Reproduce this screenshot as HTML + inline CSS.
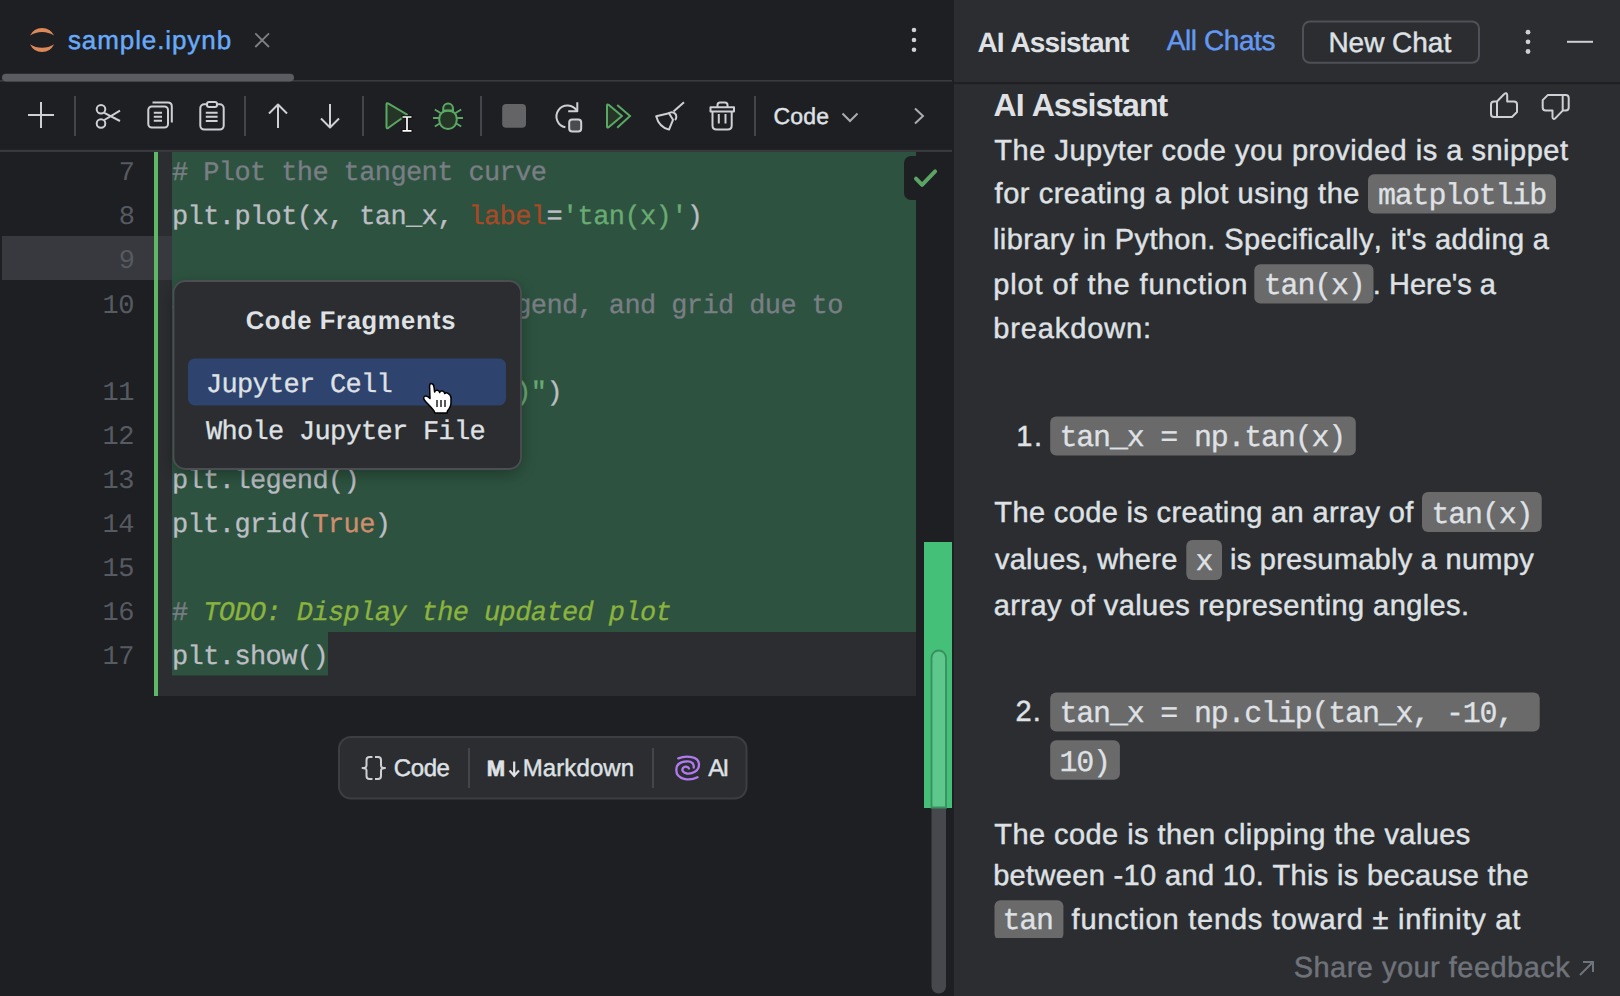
<!DOCTYPE html>
<html><head><meta charset="utf-8"><title>sample.ipynb - AI Assistant</title>
<style>
html,body{margin:0;padding:0;background:#1e1f22;width:1620px;height:996px;overflow:hidden}
svg{display:block;font-kerning:none;text-rendering:geometricPrecision}
text{font-kerning:none}
</style></head><body>
<svg width="1620" height="996" viewBox="0 0 1620 996">
<rect x="0.00" y="0.00" width="954.00" height="996.00" rx="0" fill="#1e1f22" />
<path d="M30,35.6 A13.3,13.3 0 0 1 54.1,35.6 A22.5,22.5 0 0 0 30,35.6 Z" fill="#dc8859"/>
<path d="M30,44.3 A13.3,13.3 0 0 0 54.1,44.3 A22.5,22.5 0 0 1 30,44.3 Z" fill="#dc8859"/>
<text x="67.98" y="49.40" fill="#68aafb" style="font-family:'Liberation Sans', sans-serif;font-size:26px;letter-spacing:0.902px;stroke:#68aafb;stroke-width:0.45px;" >sample.ipynb</text>
<path d="M255.3,33.3 L269,47 M269,33.3 L255.3,47" stroke="#7d8086" stroke-width="1.8" fill="none"/>
<circle cx="914" cy="30" r="2.3" fill="#ced0d6"/>
<circle cx="914" cy="40" r="2.3" fill="#ced0d6"/>
<circle cx="914" cy="49.8" r="2.3" fill="#ced0d6"/>
<rect x="0.00" y="80.00" width="952.00" height="1.60" rx="0" fill="#393b40" />
<rect x="2.00" y="73.80" width="292.00" height="7.60" rx="3.8" fill="#5a5c61" />
<rect x="0.00" y="149.90" width="952.00" height="2.00" rx="0" fill="#393b40" />
<path d="M28,115 H54 M41,102 V128" stroke="#ced0d6" stroke-width="2" fill="none" stroke-linecap="butt" stroke-linejoin="round"/>
<rect x="74.00" y="96.00" width="2.00" height="40.00" rx="0" fill="#43454a" />
<rect x="244.00" y="96.00" width="2.00" height="40.00" rx="0" fill="#43454a" />
<rect x="362.00" y="96.00" width="2.00" height="40.00" rx="0" fill="#43454a" />
<rect x="480.00" y="96.00" width="2.00" height="40.00" rx="0" fill="#43454a" />
<rect x="754.00" y="96.00" width="2.00" height="40.00" rx="0" fill="#43454a" />
<circle cx="101" cy="109.3" r="4.3" stroke="#ced0d6" stroke-width="2" fill="none" stroke-linecap="butt" stroke-linejoin="round"/><circle cx="101" cy="123.5" r="4.3" stroke="#ced0d6" stroke-width="2" fill="none" stroke-linecap="butt" stroke-linejoin="round"/>
<path d="M104.3,112.8 L120,121 M104.3,120 L120,110.6" stroke="#ced0d6" stroke-width="2" fill="none" stroke-linecap="butt" stroke-linejoin="round"/>
<rect x="148.3" y="106.5" width="19.7" height="21.1" rx="3.5" stroke="#ced0d6" stroke-width="2" fill="none" stroke-linecap="butt" stroke-linejoin="round"/>
<path d="M152.5,102.5 H167.8 Q171.8,102.5 171.8,106.5 V122.5" stroke="#ced0d6" stroke-width="2" fill="none" stroke-linecap="butt" stroke-linejoin="round"/>
<path d="M153.8,112.7 H162 M153.8,116.7 H162 M153.8,120.8 H162" stroke="#ced0d6" stroke-width="2" fill="none" stroke-linecap="butt" stroke-linejoin="round"/>
<rect x="200.3" y="104.2" width="23.4" height="25.4" rx="4" stroke="#ced0d6" stroke-width="2" fill="none" stroke-linecap="butt" stroke-linejoin="round"/>
<rect x="207" y="102" width="10" height="5" rx="2" fill="#1e1f22" stroke="#ced0d6" stroke-width="2" fill="none" stroke-linecap="butt" stroke-linejoin="round"/>
<path d="M205.8,112.7 H217.6 M205.8,116.7 H217.6 M205.8,121 H217.6" stroke="#ced0d6" stroke-width="2" fill="none" stroke-linecap="butt" stroke-linejoin="round"/>
<path d="M278,104.5 V128 M269,113.5 L278,104.5 L287,113.5" stroke="#ced0d6" stroke-width="2" fill="none" stroke-linecap="butt" stroke-linejoin="round"/>
<path d="M330,104 V127.5 M321,118.5 L330,127.5 L339,118.5" stroke="#ced0d6" stroke-width="2" fill="none" stroke-linecap="butt" stroke-linejoin="round"/>
<path d="M386.5,104.5 Q386.5,102.5 388.5,103.6 L407,114.5 L388.5,127.8 Q386.5,129 386.5,127 Z" stroke="#5aa864" stroke-width="2" fill="#253627" stroke-linejoin="round"/>
<path d="M401.5,117 H412.5 M407,117 V130.8 M401.5,130.8 H412.5" stroke="#111" stroke-width="3.6"/>
<path d="M402.5,117 H411.5 M407,117 V130.8 M402.5,130.8 H411.5" stroke="#fff" stroke-width="1.7"/>
<path d="M443.2,110.5 V108.5 A4.9,5 0 0 1 453,108.5 V110.5 Z" stroke="#5aa864" stroke-width="2" fill="#253627" stroke-linejoin="round"/>
<path d="M448,110.8 C453.5,110.8 456.8,114 456.8,119.5 C456.8,125 453,129 448,129 C443,129 439.2,125 439.2,119.5 C439.2,114 442.5,110.8 448,110.8 Z" stroke="#5aa864" stroke-width="2" fill="#253627" stroke-linejoin="round"/>
<path d="M433,118 H439.5 M456.5,118 H463 M434.8,109.5 L440.5,113 M461.2,109.5 L455.5,113 M434.8,126.5 L440.5,123 M461.2,126.5 L455.5,123" stroke="#5aa864" stroke-width="2"/>
<rect x="502.20" y="104.10" width="23.80" height="23.70" rx="4" fill="#646466" />
<path d="M577,111 A11,11 0 1 0 565.4,127.3" stroke="#ced0d6" stroke-width="2" fill="none" stroke-linecap="butt" stroke-linejoin="round"/>
<path d="M577.3,102.2 V111.3 H568.2" stroke="#ced0d6" stroke-width="2" fill="none" stroke-linecap="butt" stroke-linejoin="round"/>
<rect x="569.2" y="119.5" width="12" height="12" rx="3" fill="#4a4b4f" stroke="#ced0d6" stroke-width="2" fill="none" stroke-linecap="butt" stroke-linejoin="round"/>
<path d="M607,105.5 Q607,103.8 608.6,104.8 L622,116 L608.6,127.2 Q607,128.2 607,126.5 Z" stroke="#5aa864" stroke-width="2" fill="#253627" stroke-linejoin="round"/>
<path d="M617.2,104.9 L630,116 L617.2,127.7" stroke="#5aa864" stroke-width="2" fill="none"/>
<path d="M684,102.2 L673.5,111.5" stroke="#ced0d6" stroke-width="2" fill="none" stroke-linecap="butt" stroke-linejoin="round"/>
<path d="M668.5,113.5 A4,4 0 0 1 675,120" stroke="#ced0d6" stroke-width="2" fill="none" stroke-linecap="butt" stroke-linejoin="round"/>
<path d="M656.2,116.2 L669,113.3 L673,119.8 L669,129.6 Q659,127 656.2,116.2 Z" stroke="#ced0d6" stroke-width="2" fill="none" stroke-linecap="butt" stroke-linejoin="round"/>
<path d="M710.5,107.2 H734 V111.5 H710.5 Z" stroke="#ced0d6" stroke-width="2" fill="none" stroke-linecap="butt" stroke-linejoin="round"/>
<path d="M717.5,107 V105 Q717.5,102.5 720,102.5 H725 Q727.5,102.5 727.5,105 V107" stroke="#ced0d6" stroke-width="2" fill="none" stroke-linecap="butt" stroke-linejoin="round"/>
<path d="M712.5,111.5 V125.5 Q712.5,129.5 716.5,129.5 H727.7 Q731.7,129.5 731.7,125.5 V111.5" stroke="#ced0d6" stroke-width="2" fill="none" stroke-linecap="butt" stroke-linejoin="round"/>
<path d="M718.8,114 V123.5 M725.5,114 V123.5" stroke="#ced0d6" stroke-width="2" fill="none" stroke-linecap="butt" stroke-linejoin="round"/>
<text x="773.43" y="124.00" fill="#dfe1e5" style="font-family:'Liberation Sans', sans-serif;font-size:23px;letter-spacing:0.202px;stroke:#dfe1e5;stroke-width:0.45px;" >Code</text>
<path d="M842.5,113.5 L850,121 L857.5,113.5" stroke="#a9acb1" stroke-width="2" fill="none"/>
<path d="M915,108.5 L923,116 L915,123.5" stroke="#a9acb1" stroke-width="2" fill="none"/>
<rect x="158.00" y="152.00" width="758.00" height="544.00" rx="0" fill="#2b2d30" />
<rect x="2.00" y="236.00" width="170.00" height="44.00" rx="0" fill="#38393e" />
<rect x="154.00" y="152.00" width="4.00" height="544.00" rx="0" fill="#5fb865" />
<rect x="172.00" y="152.00" width="744.00" height="480.00" rx="0" fill="#2d5340" />
<rect x="172.00" y="632.00" width="156.00" height="43.50" rx="0" fill="#2d5340" />
<text x="118.80" y="180" fill="#565a61" style="font-family:'Liberation Mono', monospace;font-size:27px;letter-spacing:-0.6px">7</text>
<text x="118.80" y="224" fill="#565a61" style="font-family:'Liberation Mono', monospace;font-size:27px;letter-spacing:-0.6px">8</text>
<text x="118.80" y="268" fill="#565a61" style="font-family:'Liberation Mono', monospace;font-size:27px;letter-spacing:-0.6px">9</text>
<text x="102.59" y="312.5" fill="#565a61" style="font-family:'Liberation Mono', monospace;font-size:27px;letter-spacing:-0.6px">10</text>
<text x="102.59" y="400" fill="#565a61" style="font-family:'Liberation Mono', monospace;font-size:27px;letter-spacing:-0.6px">11</text>
<text x="102.59" y="444" fill="#565a61" style="font-family:'Liberation Mono', monospace;font-size:27px;letter-spacing:-0.6px">12</text>
<text x="102.59" y="488" fill="#565a61" style="font-family:'Liberation Mono', monospace;font-size:27px;letter-spacing:-0.6px">13</text>
<text x="102.59" y="532" fill="#565a61" style="font-family:'Liberation Mono', monospace;font-size:27px;letter-spacing:-0.6px">14</text>
<text x="102.59" y="576" fill="#565a61" style="font-family:'Liberation Mono', monospace;font-size:27px;letter-spacing:-0.6px">15</text>
<text x="102.59" y="620" fill="#565a61" style="font-family:'Liberation Mono', monospace;font-size:27px;letter-spacing:-0.6px">16</text>
<text x="102.59" y="664" fill="#565a61" style="font-family:'Liberation Mono', monospace;font-size:27px;letter-spacing:-0.6px">17</text>
<text x="172.00" y="180.00" fill="#7a7e85" style="font-family:'Liberation Mono', monospace;font-size:27px;letter-spacing:-0.603px;stroke:#7a7e85;stroke-width:0.3px;"># Plot the tangent curve</text>
<text x="172.00" y="224.00" fill="#bcbec4" style="font-family:'Liberation Mono', monospace;font-size:27px;letter-spacing:-0.603px;stroke:#bcbec4;stroke-width:0.3px;">plt.plot(x, tan_x, </text>
<text x="468.40" y="224.00" fill="#aa4926" style="font-family:'Liberation Mono', monospace;font-size:27px;letter-spacing:-0.603px;stroke:#aa4926;stroke-width:0.3px;">label</text>
<text x="546.40" y="224.00" fill="#bcbec4" style="font-family:'Liberation Mono', monospace;font-size:27px;letter-spacing:-0.603px;stroke:#bcbec4;stroke-width:0.3px;">=</text>
<text x="562.00" y="224.00" fill="#6aab73" style="font-family:'Liberation Mono', monospace;font-size:27px;letter-spacing:-0.603px;stroke:#6aab73;stroke-width:0.3px;">&#x27;tan(x)&#x27;</text>
<text x="686.80" y="224.00" fill="#bcbec4" style="font-family:'Liberation Mono', monospace;font-size:27px;letter-spacing:-0.603px;stroke:#bcbec4;stroke-width:0.3px;">)</text>
<text x="172.00" y="312.50" fill="#7a7e85" style="font-family:'Liberation Mono', monospace;font-size:27px;letter-spacing:-0.603px;stroke:#7a7e85;stroke-width:0.3px;"># Add title, label, legend, and grid due to</text>
<text x="172.00" y="356.00" fill="#7a7e85" style="font-family:'Liberation Mono', monospace;font-size:27px;letter-spacing:-0.603px;stroke:#7a7e85;stroke-width:0.3px;">   the clipping</text>
<text x="172.00" y="400.00" fill="#bcbec4" style="font-family:'Liberation Mono', monospace;font-size:27px;letter-spacing:-0.603px;stroke:#bcbec4;stroke-width:0.3px;">plt.title(</text>
<text x="328.00" y="400.00" fill="#6aab73" style="font-family:'Liberation Mono', monospace;font-size:27px;letter-spacing:-0.603px;stroke:#6aab73;stroke-width:0.3px;">&quot;Plot: tan(x)&quot;</text>
<text x="546.40" y="400.00" fill="#bcbec4" style="font-family:'Liberation Mono', monospace;font-size:27px;letter-spacing:-0.603px;stroke:#bcbec4;stroke-width:0.3px;">)</text>
<text x="172.00" y="444.00" fill="#bcbec4" style="font-family:'Liberation Mono', monospace;font-size:27px;letter-spacing:-0.603px;stroke:#bcbec4;stroke-width:0.3px;">plt.ylabel(</text>
<text x="343.60" y="444.00" fill="#6aab73" style="font-family:'Liberation Mono', monospace;font-size:27px;letter-spacing:-0.603px;stroke:#6aab73;stroke-width:0.3px;">&quot;y&quot;</text>
<text x="390.40" y="444.00" fill="#bcbec4" style="font-family:'Liberation Mono', monospace;font-size:27px;letter-spacing:-0.603px;stroke:#bcbec4;stroke-width:0.3px;">)</text>
<text x="172.00" y="488.00" fill="#bcbec4" style="font-family:'Liberation Mono', monospace;font-size:27px;letter-spacing:-0.603px;stroke:#bcbec4;stroke-width:0.3px;">plt.legend()</text>
<text x="172.00" y="532.00" fill="#bcbec4" style="font-family:'Liberation Mono', monospace;font-size:27px;letter-spacing:-0.603px;stroke:#bcbec4;stroke-width:0.3px;">plt.grid(</text>
<text x="312.40" y="532.00" fill="#cf8e6d" style="font-family:'Liberation Mono', monospace;font-size:27px;letter-spacing:-0.603px;stroke:#cf8e6d;stroke-width:0.3px;">True</text>
<text x="374.80" y="532.00" fill="#bcbec4" style="font-family:'Liberation Mono', monospace;font-size:27px;letter-spacing:-0.603px;stroke:#bcbec4;stroke-width:0.3px;">)</text>
<text x="172.00" y="620.00" fill="#7a7e85" style="font-family:'Liberation Mono', monospace;font-size:27px;letter-spacing:-0.603px;stroke:#7a7e85;stroke-width:0.3px;"># </text>
<text x="203.20" y="620.00" fill="#8bb33d" style="font-family:'Liberation Mono', monospace;font-size:27px;letter-spacing:-0.603px;font-style:italic;stroke:#8bb33d;stroke-width:0.3px;">TODO: Display the updated plot</text>
<text x="172.00" y="664.00" fill="#bcbec4" style="font-family:'Liberation Mono', monospace;font-size:27px;letter-spacing:-0.603px;stroke:#bcbec4;stroke-width:0.3px;">plt.show()</text>
<rect x="904.00" y="156.00" width="60.00" height="44.00" rx="7" fill="#1e1f22" />
<path d="M916,178.6 L922.1,184.8 L935.1,171.4" stroke="#5aa564" stroke-width="4" stroke-linecap="round" stroke-linejoin="round" fill="none"/>
<rect x="916.00" y="200.00" width="36.00" height="796.00" rx="0" fill="#1e1f22" />
<rect x="924.00" y="542.00" width="28.00" height="266.00" rx="0" fill="#45c078" />
<rect x="931.50" y="650.50" width="14.50" height="343.00" rx="7.25" fill="#46484d" />
<path d="M931.5,807.5 V657.75 A7.25,7.25 0 0 1 946,657.75 V807.5 Z" fill="#5ec78b" stroke="#38905c" stroke-width="1.8"/>
<filter id="sh" x="-20%" y="-20%" width="140%" height="150%"><feDropShadow dx="0" dy="5" stdDeviation="9" flood-color="#000" flood-opacity="0.35"/></filter>
<rect x="173.5" y="281" width="347.5" height="188" rx="12" fill="#2b2d30" filter="url(#sh)"/>
<rect x="173.5" y="281" width="347.5" height="188" rx="12" fill="#2b2d30" stroke="#4c4e53" stroke-width="1.8"/>
<text x="245.75" y="328.60" fill="#dfe1e5" style="font-family:'Liberation Sans', sans-serif;font-size:25.5px;font-weight:bold;letter-spacing:0.653px;" >Code Fragments</text>
<rect x="188.00" y="358.40" width="318.00" height="47.20" rx="7" fill="#2e436e" />
<text x="206.00" y="392.00" fill="#dfe1e5" style="font-family:'Liberation Mono', monospace;font-size:27px;letter-spacing:-0.703px;stroke:#dfe1e5;stroke-width:0.3px;">Jupyter Cell</text>
<text x="206.00" y="439.40" fill="#dfe1e5" style="font-family:'Liberation Mono', monospace;font-size:27px;letter-spacing:-0.703px;stroke:#dfe1e5;stroke-width:0.3px;">Whole Jupyter File</text>
<path d="M431,383.5 C432.8,383.5 433.8,385 434,387 L434.6,392 C435,390.5 436,390 437.5,390.2 C439,390.5 439.5,391.5 439.7,392.5 C440,391 441.5,390.8 442.5,391 C444,391.3 444.5,392.5 444.7,393.5 C445.5,392.5 447,392.7 448,393.3 C450,394.3 451,396 451,398 L451,403 C451,406 449,409 447.5,411 L447,413 L435,413 L434,411 C432,408 429,405 426,402 C423.5,399.5 423,397.5 424.5,396.5 C426,395.5 428,396.5 430,398.5 L429.6,387 C429.5,385 430,383.5 431,383.5 Z" fill="#fff" stroke="#000" stroke-width="1.5" stroke-linejoin="round"/>
<path d="M437,400 V407 M441,400 V407 M445,400 V407" stroke="#000" stroke-width="1.3"/>
<rect x="339" y="737" width="407.5" height="61.5" rx="12" fill="#2b2d30" stroke="#3c3e43" stroke-width="2"/>
<path d="M372.5,757 H369.5 Q366.5,757 366.5,760 V765.5 Q366.5,768 362.5,768 Q366.5,768 366.5,770.5 V776 Q366.5,779 369.5,779 H372.5" stroke="#ced0d6" stroke-width="2" fill="none" stroke-linecap="butt" stroke-linejoin="round"/>
<path d="M375,757 H378 Q381,757 381,760 V765.5 Q381,768 385,768 Q381,768 381,770.5 V776 Q381,779 378,779 H375" stroke="#ced0d6" stroke-width="2" fill="none" stroke-linecap="butt" stroke-linejoin="round"/>
<text x="393.78" y="776.10" fill="#dfe1e5" style="font-family:'Liberation Sans', sans-serif;font-size:24px;letter-spacing:-0.397px;stroke:#dfe1e5;stroke-width:0.45px;" >Code</text>
<rect x="468.00" y="748.00" width="2.00" height="40.00" rx="0" fill="#43454a" />
<text x="486.83" y="776.10" fill="#dfe1e5" style="font-family:'Liberation Sans', sans-serif;font-size:22px;font-weight:bold;" stroke="#dfe1e5" stroke-width="0.7">M</text>
<path d="M514.2,761.5 V775.5 M509.5,770.5 L514.2,775.8 L519,770.5" stroke="#dfe1e5" stroke-width="2.2" fill="none"/>
<text x="522.63" y="776.10" fill="#dfe1e5" style="font-family:'Liberation Sans', sans-serif;font-size:24px;letter-spacing:0.117px;stroke:#dfe1e5;stroke-width:0.45px;" >Markdown</text>
<rect x="652.00" y="748.00" width="2.00" height="40.00" rx="0" fill="#43454a" />
<path d="M678.3,758.3 C686,755.5 699,756 699,764.5 C699,771.5 692,774 687,773.5 C683,773 681.5,770 683,768 C684.5,766 688,766.5 689,768.5" stroke="#b27af0" stroke-width="2.3" fill="none" stroke-linecap="round"/>
<path d="M697.5,777.3 C690,781 676.3,780 676.3,770 C676.3,763 682.5,761.3 687.5,761.3 C692,761.3 694.2,764 693.7,767.5" stroke="#b27af0" stroke-width="2.3" fill="none" stroke-linecap="round"/>
<text x="708.15" y="775.90" fill="#dfe1e5" style="font-family:'Liberation Sans', sans-serif;font-size:24px;letter-spacing:-1.614px;stroke:#dfe1e5;stroke-width:0.45px;" >AI</text>
<rect x="954.00" y="0.00" width="666.00" height="996.00" rx="0" fill="#2b2d30" />
<rect x="954.00" y="82.20" width="666.00" height="2.00" rx="0" fill="#1e1f22" />
<text x="977.50" y="52.20" fill="#dfe1e5" style="font-family:'Liberation Sans', sans-serif;font-size:28px;font-weight:bold;letter-spacing:-0.916px;" >AI Assistant</text>
<text x="1166.65" y="50.00" fill="#6499f2" style="font-family:'Liberation Sans', sans-serif;font-size:28px;letter-spacing:-0.409px;stroke:#6499f2;stroke-width:0.45px;" >All Chats</text>
<rect x="1303" y="21.4" width="176" height="41.4" rx="7" fill="none" stroke="#4e5157" stroke-width="2"/>
<text x="1328.40" y="52.00" fill="#dfe1e5" style="font-family:'Liberation Sans', sans-serif;font-size:28px;letter-spacing:-0.019px;stroke:#dfe1e5;stroke-width:0.45px;" >New Chat</text>
<circle cx="1528" cy="32.2" r="2.4" fill="#ced0d6"/>
<circle cx="1528" cy="41.8" r="2.4" fill="#ced0d6"/>
<circle cx="1528" cy="51.5" r="2.4" fill="#ced0d6"/>
<rect x="1567.00" y="40.80" width="26.00" height="2.00" rx="0" fill="#ced0d6" />
<text x="993.60" y="115.60" fill="#dfe1e5" style="font-family:'Liberation Sans', sans-serif;font-size:32px;font-weight:bold;letter-spacing:-0.941px;" >AI Assistant</text>
<path d="M1497,101.5 L1504,94.2 Q1506.8,91.8 1507.2,95 L1507.2,101.5 L1514,101.5 Q1517,101.5 1517,104.5 L1517,112 L1512,117 L1494,117 Q1491,117 1491,114 L1491,104.5 Q1491,101.5 1494,101.5 Z M1497,101.5 V117" stroke="#ced0d6" stroke-width="2" fill="none" stroke-linecap="butt" stroke-linejoin="round"/>
<path d="M1497,101.5 L1504,94.2 Q1506.8,91.8 1507.2,95 L1507.2,101.5 L1514,101.5 Q1517,101.5 1517,104.5 L1517,112 L1512,117 L1494,117 Q1491,117 1491,114 L1491,104.5 Q1491,101.5 1494,101.5 Z M1497,101.5 V117" stroke="#ced0d6" stroke-width="2" fill="none" stroke-linecap="butt" stroke-linejoin="round" transform="translate(1555.7,107.1) rotate(180) translate(-1504,-105)"/>
<text x="994.35" y="160.40" fill="#dfe1e5" style="font-family:'Liberation Sans', sans-serif;font-size:29px;letter-spacing:0.505px;stroke:#dfe1e5;stroke-width:0.45px;" >The Jupyter code you provided is a snippet</text>
<text x="994.59" y="203.00" fill="#dfe1e5" style="font-family:'Liberation Sans', sans-serif;font-size:29px;letter-spacing:0.538px;stroke:#dfe1e5;stroke-width:0.45px;" >for creating a plot using the</text>
<rect x="1368.00" y="174.30" width="188.00" height="39.20" rx="6" fill="#6a6a6b" />
<text x="1378.00" y="203.50" fill="#dfe1e5" style="font-family:'Liberation Mono', monospace;font-size:30px;letter-spacing:-1.203px;stroke:#dfe1e5;stroke-width:0.3px;">matplotlib</text>
<text x="993.05" y="249.30" fill="#dfe1e5" style="font-family:'Liberation Sans', sans-serif;font-size:29px;letter-spacing:0.375px;stroke:#dfe1e5;stroke-width:0.45px;" >library in Python. Specifically, it&#x27;s adding a</text>
<text x="993.13" y="293.50" fill="#dfe1e5" style="font-family:'Liberation Sans', sans-serif;font-size:29px;letter-spacing:0.908px;stroke:#dfe1e5;stroke-width:0.45px;" >plot of the function</text>
<rect x="1254.30" y="264.30" width="119.20" height="39.30" rx="6" fill="#6a6a6b" />
<text x="1263.80" y="294.00" fill="#dfe1e5" style="font-family:'Liberation Mono', monospace;font-size:30px;letter-spacing:-1.203px;stroke:#dfe1e5;stroke-width:0.3px;">tan(x)</text>
<text x="1372.85" y="293.50" fill="#dfe1e5" style="font-family:'Liberation Sans', sans-serif;font-size:29px;letter-spacing:-0.005px;stroke:#dfe1e5;stroke-width:0.45px;" >. Here&#x27;s a</text>
<text x="993.13" y="338.00" fill="#dfe1e5" style="font-family:'Liberation Sans', sans-serif;font-size:29px;letter-spacing:0.899px;stroke:#dfe1e5;stroke-width:0.45px;" >breakdown:</text>
<text x="1016.19" y="445.80" fill="#dfe1e5" style="font-family:'Liberation Sans', sans-serif;font-size:29px;letter-spacing:1.671px;stroke:#dfe1e5;stroke-width:0.45px;" >1.</text>
<rect x="1050.20" y="416.40" width="305.60" height="39.00" rx="6" fill="#6a6a6b" />
<text x="1059.50" y="446.30" fill="#dfe1e5" style="font-family:'Liberation Mono', monospace;font-size:30px;letter-spacing:-1.203px;stroke:#dfe1e5;stroke-width:0.3px;">tan_x = np.tan(x)</text>
<text x="994.35" y="522.00" fill="#dfe1e5" style="font-family:'Liberation Sans', sans-serif;font-size:29px;letter-spacing:0.357px;stroke:#dfe1e5;stroke-width:0.45px;" >The code is creating an array of</text>
<rect x="1422.00" y="491.90" width="119.70" height="40.00" rx="6" fill="#6a6a6b" />
<text x="1431.50" y="522.50" fill="#dfe1e5" style="font-family:'Liberation Mono', monospace;font-size:30px;letter-spacing:-1.203px;stroke:#dfe1e5;stroke-width:0.3px;">tan(x)</text>
<text x="994.90" y="569.00" fill="#dfe1e5" style="font-family:'Liberation Sans', sans-serif;font-size:29px;letter-spacing:0.288px;stroke:#dfe1e5;stroke-width:0.45px;" >values, where</text>
<rect x="1186.30" y="540.00" width="35.70" height="40.00" rx="6" fill="#6a6a6b" />
<text x="1195.50" y="569.50" fill="#dfe1e5" style="font-family:'Liberation Mono', monospace;font-size:30px;letter-spacing:-1.203px;stroke:#dfe1e5;stroke-width:0.3px;">x</text>
<text x="1229.96" y="569.00" fill="#dfe1e5" style="font-family:'Liberation Sans', sans-serif;font-size:29px;letter-spacing:0.276px;stroke:#dfe1e5;stroke-width:0.45px;" >is presumably a numpy</text>
<text x="993.77" y="615.30" fill="#dfe1e5" style="font-family:'Liberation Sans', sans-serif;font-size:29px;letter-spacing:0.407px;stroke:#dfe1e5;stroke-width:0.45px;" >array of values representing angles.</text>
<text x="1015.54" y="721.40" fill="#dfe1e5" style="font-family:'Liberation Sans', sans-serif;font-size:29px;letter-spacing:1.121px;stroke:#dfe1e5;stroke-width:0.45px;" >2.</text>
<rect x="1050.20" y="692.40" width="489.50" height="39.20" rx="6" fill="#6a6a6b" />
<text x="1059.50" y="721.90" fill="#dfe1e5" style="font-family:'Liberation Mono', monospace;font-size:30px;letter-spacing:-1.203px;stroke:#dfe1e5;stroke-width:0.3px;">tan_x = np.clip(tan_x, -10,</text>
<rect x="1050.20" y="740.20" width="69.70" height="39.60" rx="6" fill="#6a6a6b" />
<text x="1059.50" y="770.90" fill="#dfe1e5" style="font-family:'Liberation Mono', monospace;font-size:30px;letter-spacing:-1.203px;stroke:#dfe1e5;stroke-width:0.3px;">10)</text>
<text x="994.35" y="843.80" fill="#dfe1e5" style="font-family:'Liberation Sans', sans-serif;font-size:29px;letter-spacing:0.427px;stroke:#dfe1e5;stroke-width:0.45px;" >The code is then clipping the values</text>
<text x="993.13" y="885.20" fill="#dfe1e5" style="font-family:'Liberation Sans', sans-serif;font-size:29px;letter-spacing:0.345px;stroke:#dfe1e5;stroke-width:0.45px;" >between -10 and 10. This is because the</text>
<text x="1071.59" y="928.50" fill="#dfe1e5" style="font-family:'Liberation Sans', sans-serif;font-size:29px;letter-spacing:0.782px;stroke:#dfe1e5;stroke-width:0.45px;" >function tends toward ± infinity at</text>
<clipPath id="cl"><rect x="954" y="0" width="666" height="938"/></clipPath>
<rect x="994.50" y="900.30" width="68.90" height="39.80" rx="6" fill="#6a6a6b" clip-path="url(#cl)"/>
<text x="1002.50" y="929.00" fill="#dfe1e5" style="font-family:'Liberation Mono', monospace;font-size:30px;letter-spacing:-1.203px;stroke:#dfe1e5;stroke-width:0.3px;">tan</text>
<text x="1293.68" y="977.40" fill="#6f737a" style="font-family:'Liberation Sans', sans-serif;font-size:29px;letter-spacing:0.470px;stroke:#6f737a;stroke-width:0.45px;" >Share your feedback</text>
<path d="M1580,975 L1593,962 M1583,962 H1593 V972" stroke="#6f737a" stroke-width="2" fill="none"/>
</svg>
</body></html>
